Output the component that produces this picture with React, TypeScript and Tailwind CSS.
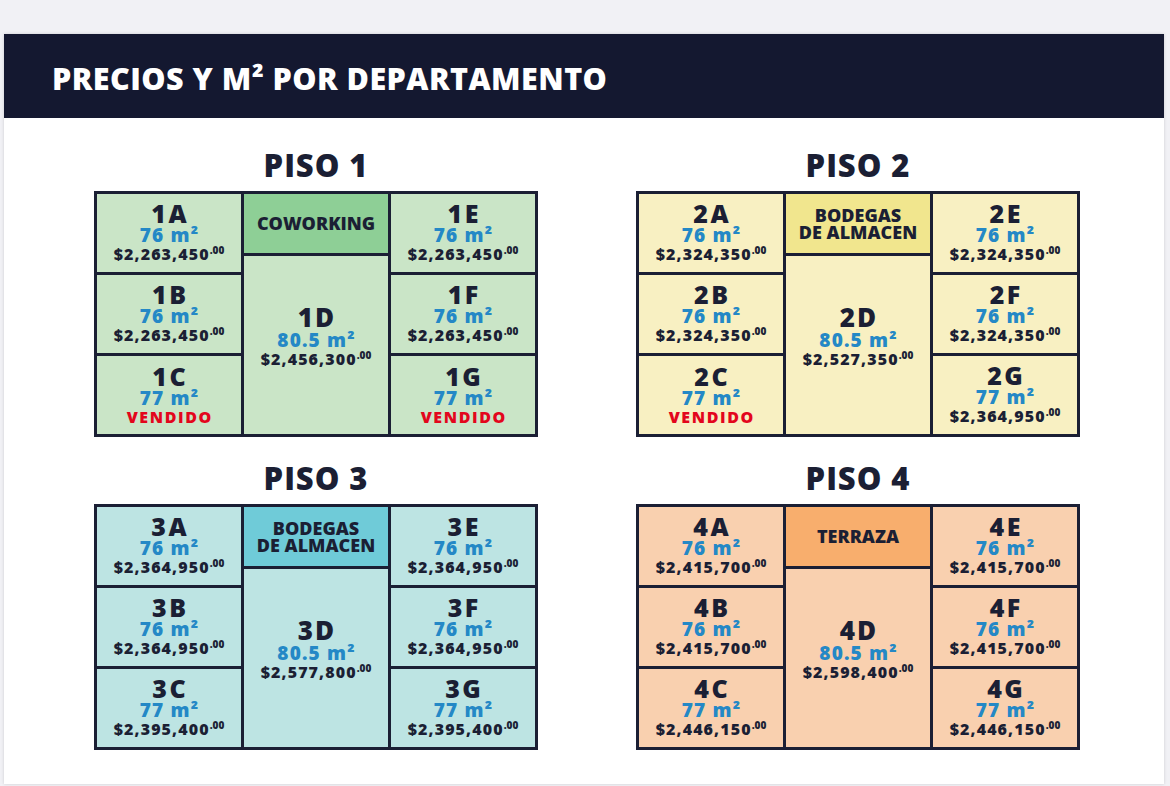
import React from "react";

type Unit = { id: string; m2: string; price?: string; sold?: boolean };

type Floor = {
  title: string;
  left: Unit[];
  right: Unit[];
  amenity: string[];
  main: Unit;
  cell: string;
  head: string;
};

const floors: Floor[] = [
  {
    title: "PISO 1",
    cell: "bg-[#cae5c7]",
    head: "bg-[#8ecf96]",
    amenity: ["COWORKING"],
    main: { id: "1D", m2: "80.5", price: "$2,456,300" },
    left: [
      { id: "1A", m2: "76", price: "$2,263,450" },
      { id: "1B", m2: "76", price: "$2,263,450" },
      { id: "1C", m2: "77", sold: true },
    ],
    right: [
      { id: "1E", m2: "76", price: "$2,263,450" },
      { id: "1F", m2: "76", price: "$2,263,450" },
      { id: "1G", m2: "77", sold: true },
    ],
  },
  {
    title: "PISO 2",
    cell: "bg-[#f8f0c2]",
    head: "bg-[#f1e68e]",
    amenity: ["BODEGAS", "DE ALMACEN"],
    main: { id: "2D", m2: "80.5", price: "$2,527,350" },
    left: [
      { id: "2A", m2: "76", price: "$2,324,350" },
      { id: "2B", m2: "76", price: "$2,324,350" },
      { id: "2C", m2: "77", sold: true },
    ],
    right: [
      { id: "2E", m2: "76", price: "$2,324,350" },
      { id: "2F", m2: "76", price: "$2,324,350" },
      { id: "2G", m2: "77", price: "$2,364,950" },
    ],
  },
  {
    title: "PISO 3",
    cell: "bg-[#bde4e3]",
    head: "bg-[#6fcbd8]",
    amenity: ["BODEGAS", "DE ALMACEN"],
    main: { id: "3D", m2: "80.5", price: "$2,577,800" },
    left: [
      { id: "3A", m2: "76", price: "$2,364,950" },
      { id: "3B", m2: "76", price: "$2,364,950" },
      { id: "3C", m2: "77", price: "$2,395,400" },
    ],
    right: [
      { id: "3E", m2: "76", price: "$2,364,950" },
      { id: "3F", m2: "76", price: "$2,364,950" },
      { id: "3G", m2: "77", price: "$2,395,400" },
    ],
  },
  {
    title: "PISO 4",
    cell: "bg-[#f9d0af]",
    head: "bg-[#f8ae6d]",
    amenity: ["TERRAZA"],
    main: { id: "4D", m2: "80.5", price: "$2,598,400" },
    left: [
      { id: "4A", m2: "76", price: "$2,415,700" },
      { id: "4B", m2: "76", price: "$2,415,700" },
      { id: "4C", m2: "77", price: "$2,446,150" },
    ],
    right: [
      { id: "4E", m2: "76", price: "$2,415,700" },
      { id: "4F", m2: "76", price: "$2,415,700" },
      { id: "4G", m2: "77", price: "$2,446,150" },
    ],
  },
];

function Price({ value }: { value?: string }) {
  return (
    <span className="text-[16px] leading-[18px] tracking-[0.07em] text-[#1b1f34]">
      {value}
      <span className="relative -top-[6px] text-[10px] tracking-normal">.00</span>
    </span>
  );
}

function UnitText({ unit }: { unit: Unit }) {
  return (
    <div className="flex flex-col items-center">
      <span className="pl-[0.1em] text-[25px] leading-[25px] tracking-[0.1em] text-[#1b1f34]">
        {unit.id}
      </span>
      <span className="pl-[0.06em] text-[19px] leading-[19px] tracking-[0.06em] text-[#2488c6]">
        {unit.m2} m²
      </span>
      {unit.sold ? (
        <span className="pl-[0.1em] text-[16px] leading-[18px] tracking-[0.1em] text-[#e3061c]">
          VENDIDO
        </span>
      ) : (
        <Price value={unit.price} />
      )}
    </div>
  );
}

function FloorPlan({ floor }: { floor: Floor }) {
  return (
    <div className="flex flex-col">
      <h2 className="flex h-[40px] items-center justify-center text-[31px] tracking-[0.03em] text-[#1b1f34]">
        {floor.title}
      </h2>
      <div className="mt-[6px] grid grid-cols-3 gap-[3px] bg-[#1b1f34] p-[3px]">
        <div className="flex flex-col gap-[3px]">
          {floor.left.map((u) => (
            <div key={u.id} className={`flex h-[78px] items-center justify-center ${floor.cell}`}>
              <UnitText unit={u} />
            </div>
          ))}
        </div>
        <div className="flex flex-col gap-[3px]">
          <div
            className={`flex h-[59px] flex-col items-center justify-center text-[18px] leading-[17px] ${floor.head} text-[#1b1f34]`}
          >
            {floor.amenity.map((t) => (
              <span key={t}>{t}</span>
            ))}
          </div>
          <div className={`flex flex-1 items-center justify-center pb-[16px] ${floor.cell}`}>
            <div className="flex flex-col items-center">
              <span className="pl-[0.08em] text-[26px] leading-[26px] tracking-[0.08em] text-[#1b1f34]">
                {floor.main.id}
              </span>
              <span className="pl-[0.06em] text-[19px] leading-[20px] tracking-[0.06em] text-[#2488c6]">
                {floor.main.m2} m²
              </span>
              <Price value={floor.main.price} />
            </div>
          </div>
        </div>
        <div className="flex flex-col gap-[3px]">
          {floor.right.map((u) => (
            <div key={u.id} className={`flex h-[78px] items-center justify-center ${floor.cell}`}>
              <UnitText unit={u} />
            </div>
          ))}
        </div>
      </div>
    </div>
  );
}

export default function App() {
  return (
    <div
      className="min-h-screen bg-[#f1f1f5] pl-[4px] pr-[6px] pt-[34px] font-extrabold"
      style={{ fontFamily: "'Open Sans', 'Liberation Sans', sans-serif" }}
    >
      <div className="bg-white shadow-[0_0_3px_rgba(0,0,0,0.15)]">
        <header className="flex h-[84px] items-center bg-[#141830] pl-[48px] pt-[5px]">
          <h1 className="text-[30.5px] tracking-[0.015em] text-white">PRECIOS Y M² POR DEPARTAMENTO</h1>
        </header>
        <div className="grid grid-cols-[444px_444px] gap-x-[98px] gap-y-[21px] pb-[34px] pl-[90px] pt-[27px]">
          {floors.map((f) => (
            <FloorPlan key={f.title} floor={f} />
          ))}
        </div>
      </div>
    </div>
  );
}
